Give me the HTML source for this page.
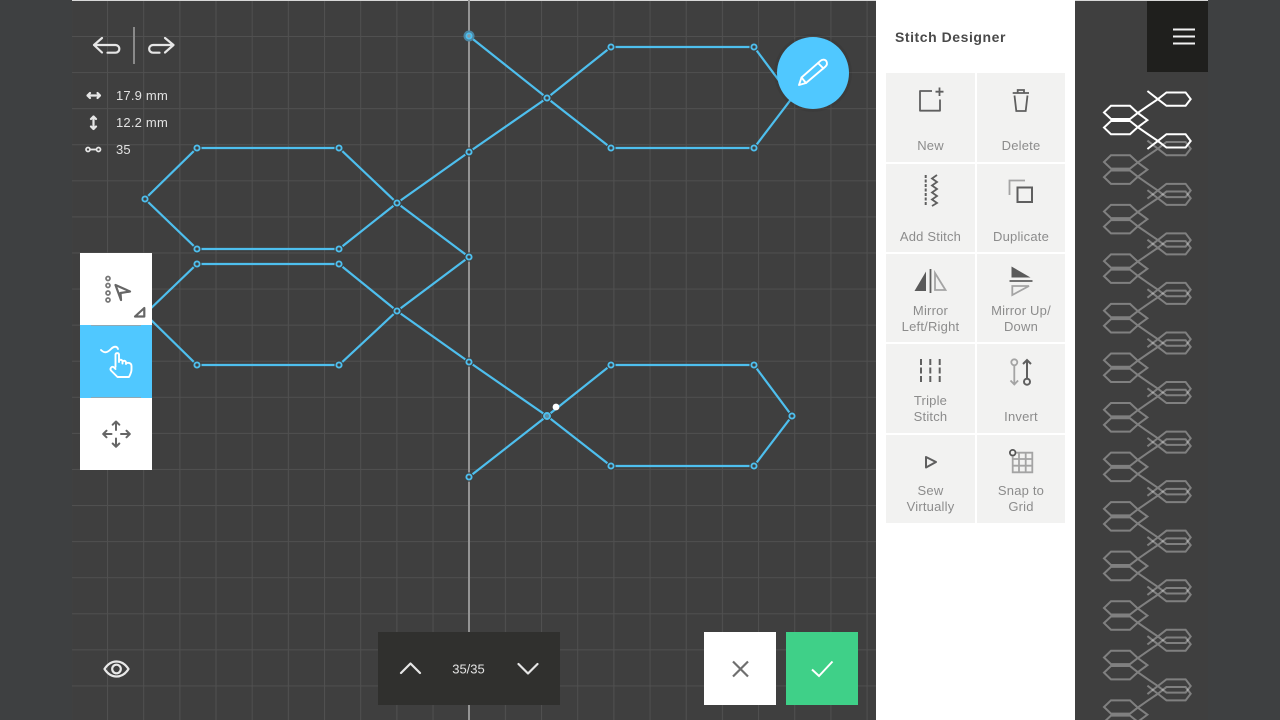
<!DOCTYPE html>
<html><head><meta charset="utf-8"><style>
html,body{margin:0;padding:0;width:1280px;height:720px;overflow:hidden;background:#3e4041}
svg{position:absolute;left:0;top:0;display:block}
text{font-family:"Liberation Sans",sans-serif;font-size:13px;letter-spacing:.2px}
.l{fill:#8c8c8c;text-anchor:middle}
.w{fill:#e2e2e2}
.d{fill:none;stroke:#5f5f5f;stroke-width:2}
.g{fill:none;stroke:#a4a4a4;stroke-width:1.8}
.i{fill:none;stroke:#e6e6e6;stroke-width:2.2;stroke-linecap:round;stroke-linejoin:round}
</style></head><body>
<svg width="1280" height="720" viewBox="0 0 1280 720" xmlns="http://www.w3.org/2000/svg">
<defs>
<pattern id="gr" x="107" y="36" width="36.17" height="36.08" patternUnits="userSpaceOnUse">
<path d="M.5 0V36.08M0 .5H36.17" fill="none" stroke="#505050" stroke-width="1"/>
</pattern>
<polyline id="st" vector-effect="non-scaling-stroke" fill="none" stroke-linejoin="miter" points="469,36 547,98 611,148 754,148 792,98 754,47 611,47 547,98 469,152 397,203 339,249 197,249 145,199 197,148 339,148 397,203 469,257 397,311 339,365 197,365 145,314 197,264 339,264 397,311 469,362 547,416 611,466 754,466 792,416 754,365 611,365 547,416 469,477"/>
<g id="n"><circle r="4.6" fill="#3f3f3f"/><circle r="2.6" fill="#3f3f3f" stroke="#4ebfee" stroke-width="1.9"/></g>
</defs>
<rect x="72" y="0" width="804" height="720" fill="#3f3f3f"/>
<rect x="72" y="0" width="804" height="720" fill="url(#gr)"/>
<rect x="72" y="0" width="1136" height="1" fill="#d8d8d8"/>
<rect x="468" y="0" width="2" height="720" fill="#949494"/>

<use href="#st" stroke="#4ebfee" stroke-width="2.2"/>
<use href="#n" x="197" y="148"/><use href="#n" x="339" y="148"/><use href="#n" x="145" y="199"/><use href="#n" x="197" y="249"/><use href="#n" x="339" y="249"/>
<use href="#n" x="397" y="203"/><use href="#n" x="469" y="152"/><use href="#n" x="547" y="98"/><use href="#n" x="611" y="47"/><use href="#n" x="754" y="47"/><use href="#n" x="611" y="148"/><use href="#n" x="754" y="148"/>
<use href="#n" x="469" y="257"/><use href="#n" x="197" y="264"/><use href="#n" x="339" y="264"/><use href="#n" x="397" y="311"/><use href="#n" x="197" y="365"/><use href="#n" x="339" y="365"/><use href="#n" x="469" y="362"/>
<use href="#n" x="611" y="365"/><use href="#n" x="754" y="365"/><use href="#n" x="792" y="416"/><use href="#n" x="611" y="466"/><use href="#n" x="754" y="466"/><use href="#n" x="469" y="477"/>
<circle cx="547" cy="416" r="4.6" fill="#3f3f3f"/><circle cx="547" cy="416" r="3" fill="#5b8ea6" stroke="#4ebfee" stroke-width="1.9"/>
<circle cx="556" cy="407" r="3.4" fill="#fff"/>
<circle cx="469" cy="36" r="5.5" fill="#4a86a4"/><circle cx="469" cy="36" r="2.6" fill="#8a9aa4" stroke="#4ebfee" stroke-width="1.8"/>

<!-- undo/redo -->
<path class="i" d="M102 38L94 45L102 52.5M94 45H115.5A3.8 3.8 0 0 1 115.5 52.7H107.5"/>
<path class="i" d="M165 38L173.5 45L165 52.5M173.5 45H153A3.8 3.8 0 0 0 153 52.7H159.5"/>
<rect x="133" y="27" width="2" height="37" fill="#8a8a8a"/>
<!-- dimensions -->
<path class="i" d="M87.5 95.5H100M90 93L87.5 95.5L90 98M97.5 93L100 95.5L97.5 98"/>
<path class="i" d="M93.5 116.5V129M91 119L93.5 116.500L96 119M91 126.500L93.500 129L96 126.500"/>
<path d="M90 149.5H96" stroke="#e6e6e6" stroke-width="1.8"/>
<circle cx="88" cy="149.5" r="2" fill="none" stroke="#e6e6e6" stroke-width="1.7"/><circle cx="98.500" cy="149.500" r="2" fill="none" stroke="#e6e6e6" stroke-width="1.7"/>
<text class="w" x="116" y="100">17.9 mm</text>
<text class="w" x="116" y="127">12.2 mm</text>
<text class="w" x="116" y="154">35</text>

<!-- tool palette -->
<rect x="80" y="253" width="72" height="72" fill="#fff"/>
<rect x="80" y="325" width="72" height="73" fill="#50c8ff"/>
<rect x="80" y="398" width="72" height="72" fill="#fff"/>
<rect x="91" y="325" width="50" height="1" fill="#8fa9b5"/><rect x="91" y="397" width="50" height="1" fill="#8fa9b5"/>
<g fill="none" stroke="#777" stroke-width="1.7"><circle cx="108" cy="278.500" r="2"/><circle cx="108" cy="285.500" r="2"/><circle cx="108" cy="293" r="2"/><circle cx="108" cy="300" r="2"/></g>
<path d="M115.500 285L130 291.500L120.500 293L121 300Z" fill="none" stroke="#666" stroke-width="2.200" stroke-linejoin="round"/>
<path d="M144.300 308V316.500H135Z" fill="none" stroke="#666" stroke-width="2.200" stroke-linejoin="round"/>
<g fill="none" stroke="#fff" stroke-width="1.900" stroke-linecap="round" stroke-linejoin="round">
<path d="M101 350C105 354 108 352 111 349C114 346 117 346 118 349"/>
<path d="M115.500 367V354.500A1.800 1.800 0 0 1 119 354.500V362M119 361.500A1.500 1.500 0 0 1 122.500 361.500V363.500M122.500 362.500A1.500 1.500 0 0 1 126 362.500V364M126 363.500C128 362 131.500 363 131.500 366V369.500C131.500 372.500 130 375 129 377H117.500L111 370.500C109.500 368.500 112 365.500 114 367.500L115.500 369"/>
</g>
<path fill="none" stroke="#666" stroke-width="2" stroke-linecap="round" stroke-linejoin="round" d="M116 422V430M112.700 424.700L116 421.500L119.300 424.700M116 438.500V446.500M112.700 443.500L116 446.800L119.300 443.500M103.500 434H111.500M106.500 430.700L103.200 434L106.500 437.300M121 434H129.500M126.500 430.700L129.800 434L126.500 437.300"/>
<!-- eye -->
<path d="M104.500 669C111 659 122 659 128.500 669C122 679 111 679 104.500 669Z" fill="none" stroke="#e8e8e8" stroke-width="2.200" stroke-linejoin="round"/>
<circle cx="116.500" cy="669" r="4.300" fill="none" stroke="#e8e8e8" stroke-width="2.200"/>

<!-- nav -->
<rect x="378" y="632" width="182" height="73" fill="#30302e"/>
<path class="i" d="M401 673L410.500 663.500L420 673M518.500 664L528 673.500L537.500 664"/>
<text class="w" x="468.500" y="673.500" text-anchor="middle" style="letter-spacing:0">35/35</text>
<!-- cancel / ok -->
<rect x="704" y="632" width="72" height="73" fill="#fff"/>
<rect x="786" y="632" width="72" height="73" fill="#3fd088"/>
<path d="M733 661.500L748 676.500M748 661.500L733 676.500" stroke="#6f6f6f" stroke-width="2.200"/>
<path d="M812 669.500L819 676L832.500 661.500" fill="none" stroke="#fff" stroke-width="2"/>
<!-- fab -->
<circle cx="813" cy="73" r="39" fill="#000" opacity=".06"/>
<circle cx="813" cy="73" r="36" fill="#50c8ff"/>
<g fill="none" stroke="#fff" stroke-width="1.900" stroke-linejoin="round" stroke-linecap="round">
<path d="M799 85L801.500 77.500L820.500 60.800C822.500 59 825.500 59.500 826.500 61.500C827.500 63.500 827 65 825.500 66.500L806 83Z"/>
<path d="M801.500 77.500L806 83M818 63L823.500 68.500"/>
</g>

<!-- panel -->
<rect x="876" y="0" width="199" height="720" fill="#fff"/>
<text x="895" y="42" style="font-size:14px;font-weight:700;fill:#4a4a4a;letter-spacing:.55px">Stitch Designer</text>
<g fill="#f2f2f1">
<rect x="886" y="73" width="89" height="89"/><rect x="977" y="73" width="88" height="89"/>
<rect x="886" y="164" width="89" height="88"/><rect x="977" y="164" width="88" height="88"/>
<rect x="886" y="254" width="89" height="88"/><rect x="977" y="254" width="88" height="88"/>
<rect x="886" y="344" width="89" height="89"/><rect x="977" y="344" width="88" height="89"/>
<rect x="886" y="435" width="89" height="88"/><rect x="977" y="435" width="88" height="88"/>
</g>
<text class="l" x="930.500" y="150">New</text>
<text class="l" x="1021" y="150">Delete</text>
<text class="l" x="930.500" y="241">Add Stitch</text>
<text class="l" x="1021" y="241">Duplicate</text>
<text class="l" x="930.500" y="315">Mirror</text><text class="l" x="930.500" y="331">Left/Right</text>
<text class="l" x="1021" y="315">Mirror Up/</text><text class="l" x="1021" y="331">Down</text>
<text class="l" x="930.500" y="405">Triple</text><text class="l" x="930.500" y="421">Stitch</text>
<text class="l" x="1021" y="421">Invert</text>
<text class="l" x="930.500" y="495">Sew</text><text class="l" x="930.500" y="511">Virtually</text>
<text class="l" x="1021" y="495">Snap to</text><text class="l" x="1021" y="511">Grid</text>

<!-- new -->
<path class="d" style="stroke-width:1.800" stroke-linejoin="round" d="M932 91H920V110.700H940V99.500"/>
<path class="d" style="stroke-width:1.800" d="M939.500 87.500V96M935.500 91.700H943.500"/>
<!-- delete -->
<path class="d" style="stroke-width:1.800" d="M1012.700 93H1029M1017.700 93V90H1024V93M1014.500 95.500L1016.300 111H1025.700L1027.500 95.500"/>
<!-- add stitch -->
<path d="M925.700 175V206" stroke="#5f5f5f" stroke-width="2" stroke-dasharray="3 1.500"/>
<path d="M937 175L932 178.500L937 182L932 185.500L937 189L932 192.500L937 196L932 199.500L937 203L932 206" fill="none" stroke="#5f5f5f" stroke-width="1.800"/>
<!-- duplicate -->
<path class="g" d="M1025 180.500H1009.500V195"/>
<rect class="d" x="1017.500" y="187.500" width="14.500" height="14.500"/>
<!-- mirror LR -->
<path d="M926 271.500V291H914.500Z" fill="#5a5a5a"/>
<path d="M930.500 269V293" stroke="#5f5f5f" stroke-width="1.800"/>
<path class="g" d="M935 273V290H945.500Z"/>
<!-- mirror UD -->
<path d="M1011.500 266.500V277.500H1030.500Z" fill="#5a5a5a"/>
<path d="M1009.500 281H1032.500" stroke="#5f5f5f" stroke-width="1.800"/>
<path class="g" d="M1012.300 286H1029L1012.300 295Z"/>
<!-- triple -->
<path d="M921 359V384M930.300 359V384M939.700 359V384" stroke="#5f5f5f" stroke-width="2" stroke-dasharray="6 2.500"/>
<!-- invert -->
<circle class="g" cx="1014.300" cy="362.300" r="3"/>
<path class="g" d="M1014.300 366V384.500M1010.500 380.500L1014.300 384.500L1018.100 380.500"/>
<path class="d" d="M1027 378V360M1023 364L1027 360L1031 364"/>
<circle class="d" cx="1027" cy="381.700" r="3"/>
<!-- sew -->
<path class="d" stroke-linejoin="round" d="M926 457V467.500L936 462Z"/>
<!-- snap -->
<path class="g" d="M1016.500 452.700H1032.300V472.300H1012.700V456.500M1019 452.700V472.300M1025.700 452.700V472.300M1012.700 459H1032.300M1012.700 465.700H1032.300"/>
<circle cx="1012.700" cy="452.700" r="2.800" fill="#f2f2f1" stroke="#555" stroke-width="1.800"/>

<!-- preview strip -->
<rect x="1075" y="0" width="133" height="720" fill="#3f3f3f"/>
<rect x="1075" y="0" width="133" height="1" fill="#d8d8d8"/>
<g stroke="#fff" stroke-opacity=".34" stroke-width="2">
<use href="#st" transform="matrix(.134 0 0 .1315 1084.570 135.820)"/>
<use href="#st" transform="matrix(.134 0 0 .1315 1084.570 185.370)"/>
<use href="#st" transform="matrix(.134 0 0 .1315 1084.570 234.920)"/>
<use href="#st" transform="matrix(.134 0 0 .1315 1084.570 284.470)"/>
<use href="#st" transform="matrix(.134 0 0 .1315 1084.570 334.020)"/>
<use href="#st" transform="matrix(.134 0 0 .1315 1084.570 383.570)"/>
<use href="#st" transform="matrix(.134 0 0 .1315 1084.570 433.120)"/>
<use href="#st" transform="matrix(.134 0 0 .1315 1084.570 482.670)"/>
<use href="#st" transform="matrix(.134 0 0 .1315 1084.570 532.220)"/>
<use href="#st" transform="matrix(.134 0 0 .1315 1084.570 581.770)"/>
<use href="#st" transform="matrix(.134 0 0 .1315 1084.570 631.320)"/>
<use href="#st" transform="matrix(.134 0 0 .1315 1084.570 680.870)"/>
</g>
<use href="#st" stroke="#fff" stroke-width="2" transform="matrix(.134 0 0 .1315 1084.570 86.270)"/>
<rect x="1147" y="1" width="61" height="71" fill="#1f1f1d"/>
<path d="M1173 29.500H1195M1173 36.500H1195M1173 43.500H1195" stroke="#f2f2f2" stroke-width="2"/>
</svg>
</body></html>
